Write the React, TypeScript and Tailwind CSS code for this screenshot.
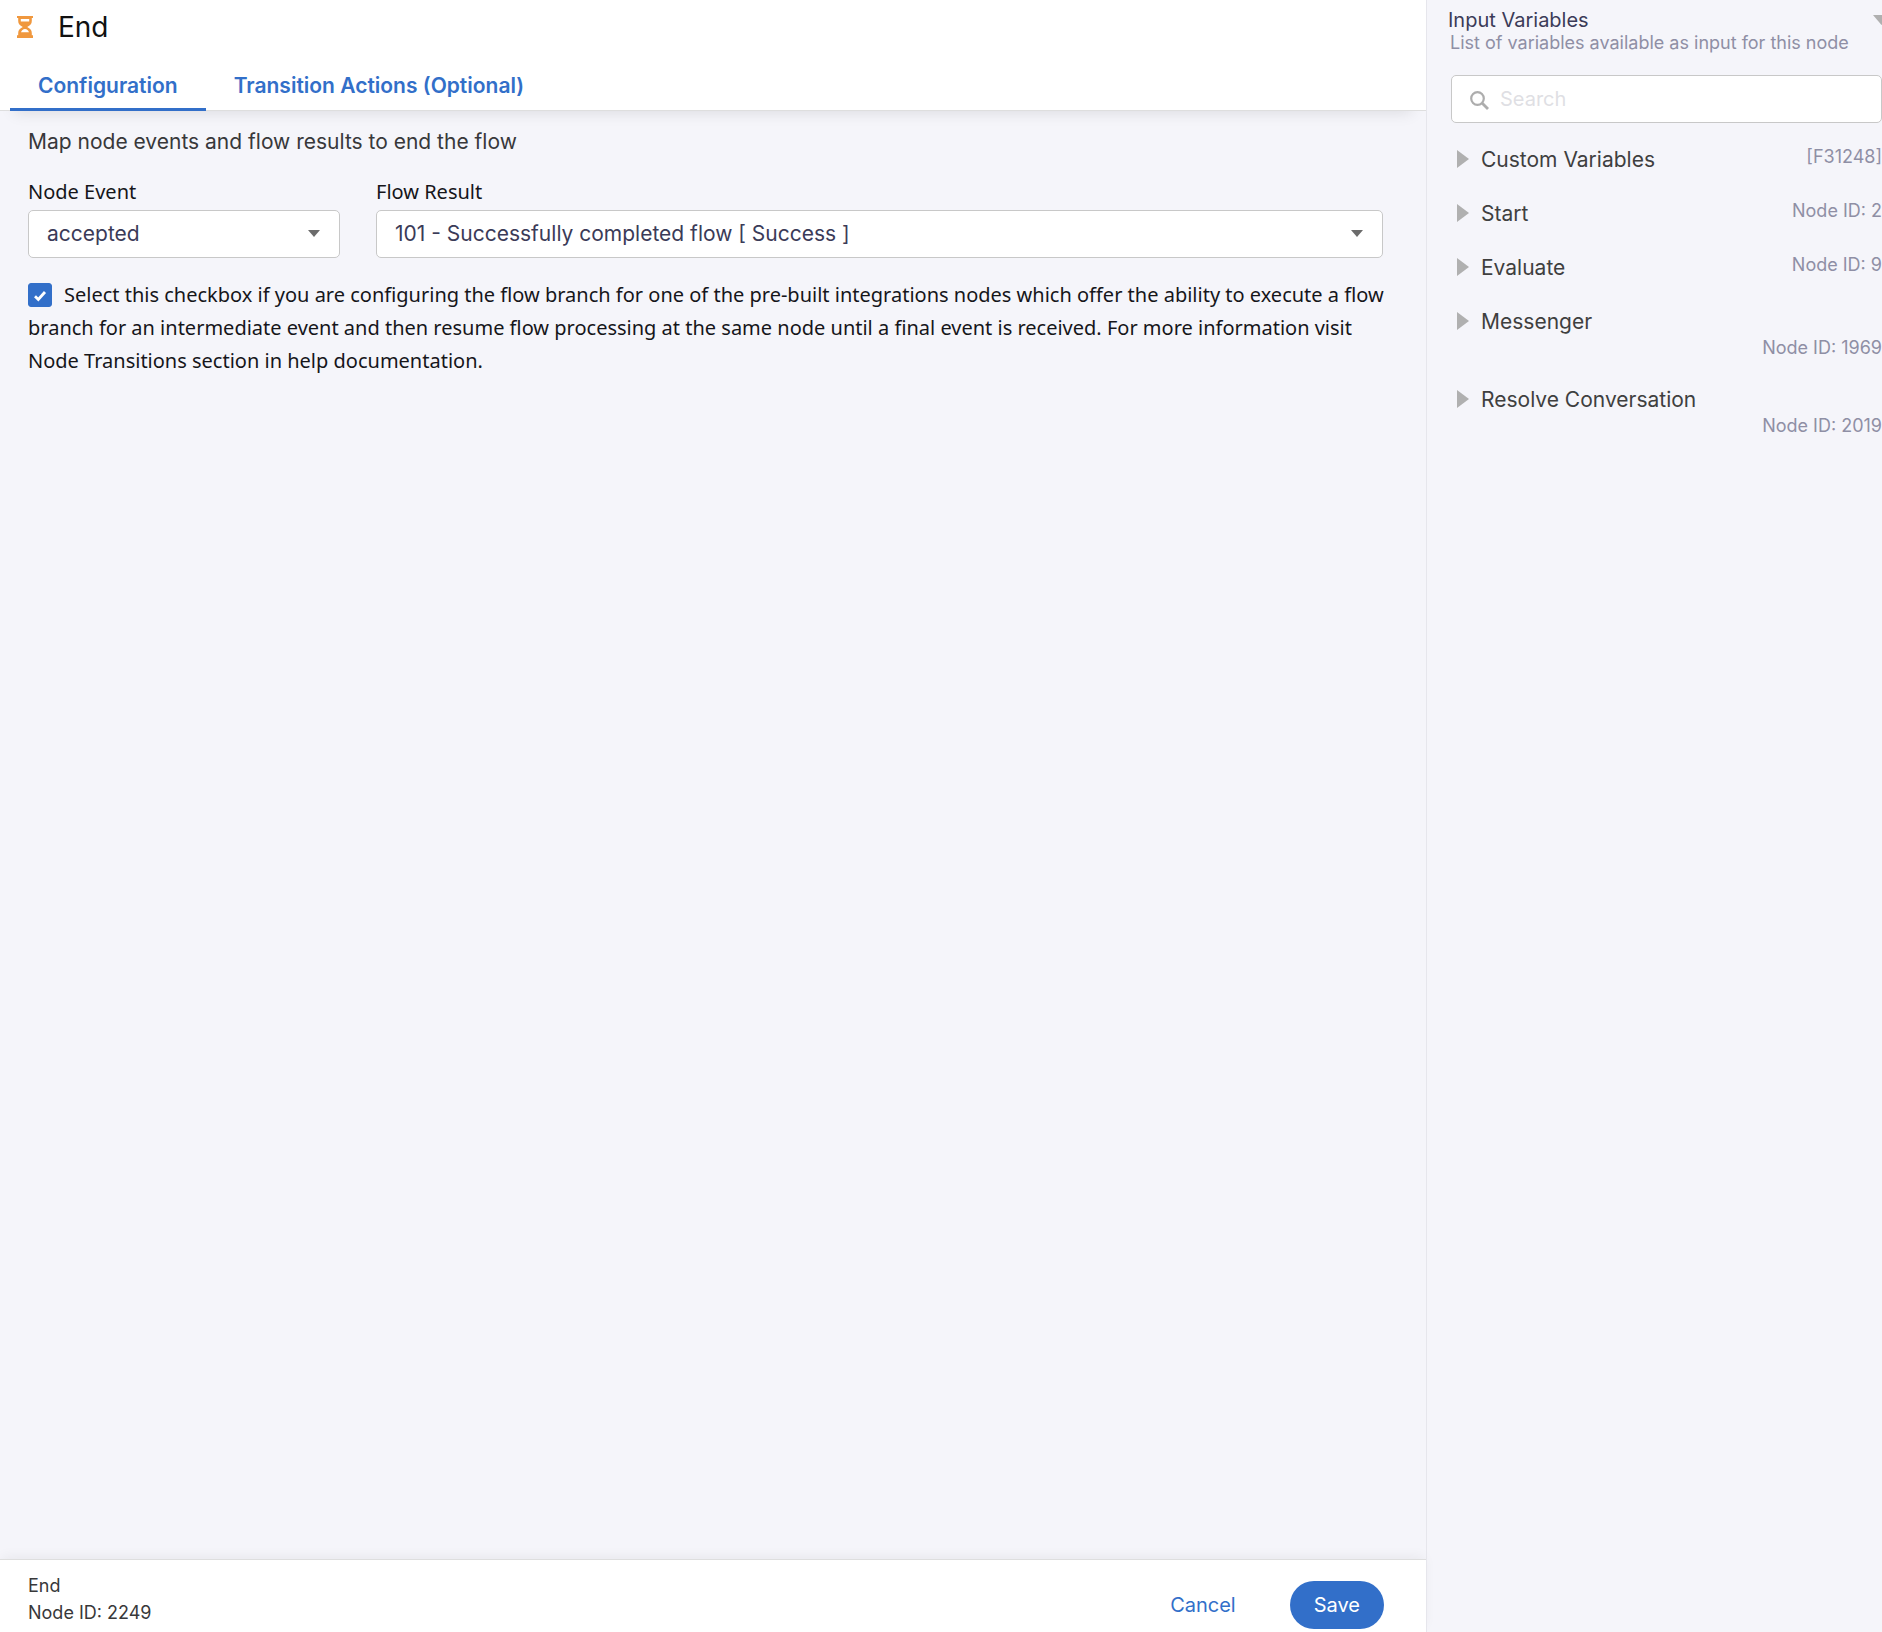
import { useState } from "react";

type Variable = { name: string; id: string; stacked?: boolean };

const variables: Variable[] = [
  { name: "Custom Variables", id: "[F31248]" },
  { name: "Start", id: "Node ID: 2" },
  { name: "Evaluate", id: "Node ID: 9" },
  { name: "Messenger", id: "Node ID: 1969", stacked: true },
  { name: "Resolve Conversation", id: "Node ID: 2019", stacked: true },
];

const tabs = ["Configuration", "Transition Actions (Optional)"];

function HourglassIcon() {
  return (
    <svg width="16" height="22" viewBox="0 0 16 22" fill="#f0983e" aria-hidden="true">
      <path
        fillRule="evenodd"
        d="M0 0h16v2h-1.200v3c0 2.800-1.600 4.400-4.600 6 3 1.600 4.600 3.200 4.600 6v2.200H16V22H0v-2.800h1.200V17c0-2.800 1.600-4.400 4.600-6C2.800 9.400 1.200 7.800 1.200 5V2H0zM3.800 3v2.400h8.400V3zM4 16.200h8c-.6-1.900-2-3.200-4-3.200s-3.400 1.300-4 3.200z"
      />
    </svg>
  );
}

function SelectField({ id, label, options, className }: { id: string; label: string; options: string[]; className: string }) {
  return (
    <div className={className}>
      <label htmlFor={id} className="block font-['Noto_Sans',sans-serif] text-[20px] leading-6 text-[#16161a]">
        {label}
      </label>
      <div className="relative mt-[6px]">
        <select
          id={id}
          className="h-12 w-full appearance-none rounded-[5px] border border-[#c8c8c8] bg-white pr-12 pl-[18px] text-[21px] text-[#3b3b58]"
        >
          {options.map((option) => (
            <option key={option}>{option}</option>
          ))}
        </select>
        <svg className="pointer-events-none absolute top-5 right-5" width="12" height="7" viewBox="0 0 12 7" fill="#6b6b6b" aria-hidden="true">
          <path d="M0 0h12L6 7z" />
        </svg>
      </div>
    </div>
  );
}

export default function App() {
  const [activeTab, setActiveTab] = useState(tabs[0]);
  const [intermediate, setIntermediate] = useState(true);

  return (
    <div className="flex min-h-screen overflow-hidden bg-[#f5f5fa] font-[Inter,sans-serif]">
      <main className="flex min-w-0 flex-1 flex-col">
        <header className="bg-white shadow-[0_16px_14px_-14px_rgba(0,0,0,0.10)]">
          <div className="flex h-[54px] items-center gap-[25px] pl-[17px]">
            <HourglassIcon />
            <h1 className="text-[28px] leading-8 text-[#111]">End</h1>
          </div>
          <nav className="flex h-[57px] border-b border-[#dedede] pl-[10px]">
            {tabs.map((tab) => (
              <button
                key={tab}
                type="button"
                onClick={() => setActiveTab(tab)}
                className={`-mb-px border-b-[3px] px-7 pt-[10px] text-[21px] font-semibold text-[#326fc9] ${
                  tab === activeTab ? "border-[#326fc9]" : "border-transparent"
                }`}
              >
                {tab}
              </button>
            ))}
          </nav>
        </header>

        <section className="flex-1 pt-[19px] pr-[43px] pl-7">
          <p className="text-[21px] leading-6 text-[#38383a]">Map node events and flow results to end the flow</p>
          <div className="mt-[26px] flex gap-9">
            <SelectField id="node-event" label="Node Event" options={["accepted"]} className="w-[312px]" />
            <SelectField
              id="flow-result"
              label="Flow Result"
              options={["101 - Successfully completed flow [ Success ]"]}
              className="flex-1"
            />
          </div>
          <div className="mt-5 -mr-2 font-['Noto_Sans',sans-serif] text-[20px] leading-[33px] text-[#16161a]">
            <span className="relative mr-3 inline-block size-6 align-[-5px]">
              <input
                id="intermediate"
                type="checkbox"
                checked={intermediate}
                onChange={(e) => setIntermediate(e.target.checked)}
                className="block size-6 appearance-none rounded-[3px] border border-[#326fc9] bg-white checked:bg-[#326fc9]"
              />
              {intermediate && (
                <svg className="pointer-events-none absolute inset-0" width="24" height="24" viewBox="0 0 24 24" fill="none" aria-hidden="true">
                  <path d="M7 13.300l3.300 3.200L17 9" stroke="#fff" strokeWidth="2.800" />
                </svg>
              )}
            </span>
            <label htmlFor="intermediate">
              Select this checkbox if you are configuring the flow branch for one of the pre-built integrations nodes which
              offer the ability to execute a flow branch for an intermediate event and then resume flow processing at the same
              node until a final event is received. For more information visit Node Transitions section in help documentation.
            </label>
          </div>
        </section>

        <footer className="flex items-start justify-between border-t border-[#dedede] bg-white pr-[42px] pb-[3px] pl-7 shadow-[0_-4px_12px_-2px_rgba(0,0,0,0.06)]">
          <div className="pt-3 text-[18px] leading-[27px] text-[#38383a]">
            <p>End</p>
            <p>Node ID: 2249</p>
          </div>
          <div className="flex gap-[54px] pt-[21px] text-[20px]">
            <button type="button" className="text-[#326fc9]">
              Cancel
            </button>
            <button type="button" className="h-12 rounded-full bg-[#326fc9] px-6 text-white">
              Save
            </button>
          </div>
        </footer>
      </main>

      <aside className="w-[456px] shrink-0 border-l border-[#e6e6ec] pt-2">
        <div className="flex items-start justify-between pl-[21px]">
          <h2 className="text-[20px] leading-6 text-[#3b3b58]">Input Variables</h2>
          <button type="button" aria-label="Collapse input variables" className="-mr-2 pt-[7px]">
            <svg width="17" height="10" viewBox="0 0 17 10" fill="#b0b0b0" aria-hidden="true">
              <path d="M0 0h17L8.500 10z" />
            </svg>
          </button>
        </div>
        <p className="pl-[23px] text-[18px] leading-[22px] text-[#8f8fa5]">List of variables available as input for this node</p>
        <div className="relative mt-[21px] ml-6">
          <svg className="absolute top-4 left-[19px]" width="19" height="19" viewBox="0 0 19 19" fill="none" stroke="#adadad" strokeWidth="2.200" aria-hidden="true">
            <circle cx="7.500" cy="7.500" r="6.300" />
            <path d="M12 12l6 6" strokeWidth="2.800" />
          </svg>
          <input
            type="search"
            aria-label="Search variables"
            placeholder="Search"
            className="block h-12 w-full rounded-[5px] border border-[#c8c8c8] bg-white pr-4 pl-12 text-[20px] text-[#3b3b58] placeholder:text-[#dfdfe4]"
          />
        </div>
        <ul className="mt-[21px] ml-[30px]">
          {variables.map((v) => (
            <li key={v.name} className={v.stacked ? "flex h-[78px] flex-col items-start" : "flex h-[54px] items-start justify-between"}>
              <button type="button" className="flex items-start gap-3 pt-1 text-[21px] leading-6 text-[#3f3f3f]">
                <svg className="mt-[2px]" width="12" height="18" viewBox="0 0 12 18" fill="#b0b0b0" aria-hidden="true">
                  <path d="M0 0l12 9L0 18z" />
                </svg>
                {v.name}
              </button>
              <span className={`text-[18px] leading-6 text-[#8f8fa5] ${v.stacked ? "self-end pt-[2px]" : "pt-px"}`}>{v.id}</span>
            </li>
          ))}
        </ul>
      </aside>
    </div>
  );
}
